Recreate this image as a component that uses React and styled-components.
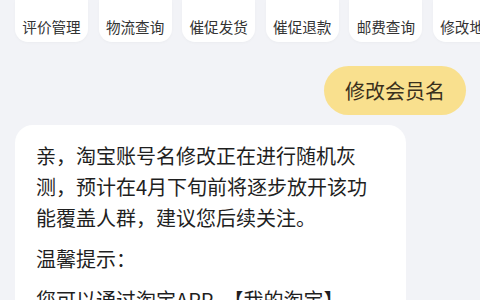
import React from 'react';
import styled, { createGlobalStyle } from 'styled-components';

const GlobalStyle = createGlobalStyle`
  html, body {
    margin: 0;
    padding: 0;
    background: #f2f3f7;
  }
  body {
    font-family: "Noto Sans CJK SC", "Noto Sans", sans-serif;
    color: #1f1f1f;
  }
`;

const Page = styled.div`
  width: 480px;
  height: 300px;
  overflow: hidden;
  display: flex;
  flex-direction: column;
  background: #f2f3f7;
`;

const ChipRow = styled.div`
  display: flex;
  gap: 10.6px;
  padding-left: 15px;
  height: 42px;
  flex-shrink: 0;
`;

const Chip = styled.div`
  flex: 0 0 73px;
  height: 42px;
  background: #fff;
  border-radius: 0 0 13px 13px;
  display: flex;
  align-items: flex-end;
  justify-content: center;
  padding-bottom: 5px;
  box-sizing: border-box;
  font-size: 14.6px;
  line-height: 20px;
  color: #333;
  white-space: nowrap;
  overflow: hidden;
  box-shadow: 0 1px 3px rgba(0, 0, 0, 0.03);
`;

const UserRow = styled.div`
  display: flex;
  justify-content: flex-end;
  padding: 24px 14px 0 0;
`;

const UserBubble = styled.div`
  height: 49px;
  padding: 0 21px;
  border-radius: 25px;
  background: #f9e08e;
  color: #3a301c;
  font-size: 20px;
  display: flex;
  align-items: center;
`;

const BotBubble = styled.div`
  margin: 10px 0 0 15px;
  width: 391px;
  box-sizing: border-box;
  padding: 15px 21px 20px;
  background: #fff;
  border-radius: 18px;
  font-size: 20px;
  line-height: 31px;
  color: #1f1f1f;
`;

const Para = styled.p`
  margin: 0 0 10px;
  line-break: strict;
`;

const chips = ['评价管理', '物流查询', '催促发货', '催促退款', '邮费查询', '修改地址'];

export default function App() {
  return (
    <Page>
      <GlobalStyle />
      <ChipRow>
        {chips.map((c) => (
          <Chip key={c}>{c}</Chip>
        ))}
      </ChipRow>
      <UserRow>
        <UserBubble>修改会员名</UserBubble>
      </UserRow>
      <BotBubble>
        <Para>亲，淘宝账号名修改正在进行随机灰测，预计在4月下旬前将逐步放开该功能覆盖人群，建议您后续关注。</Para>
        <Para>温馨提示：</Para>
        <Para>
          您可以通过淘宝APP，【我的淘宝】
          <br />
          -【设置】-【个人信息】中修改会员名。
        </Para>
      </BotBubble>
    </Page>
  );
}
